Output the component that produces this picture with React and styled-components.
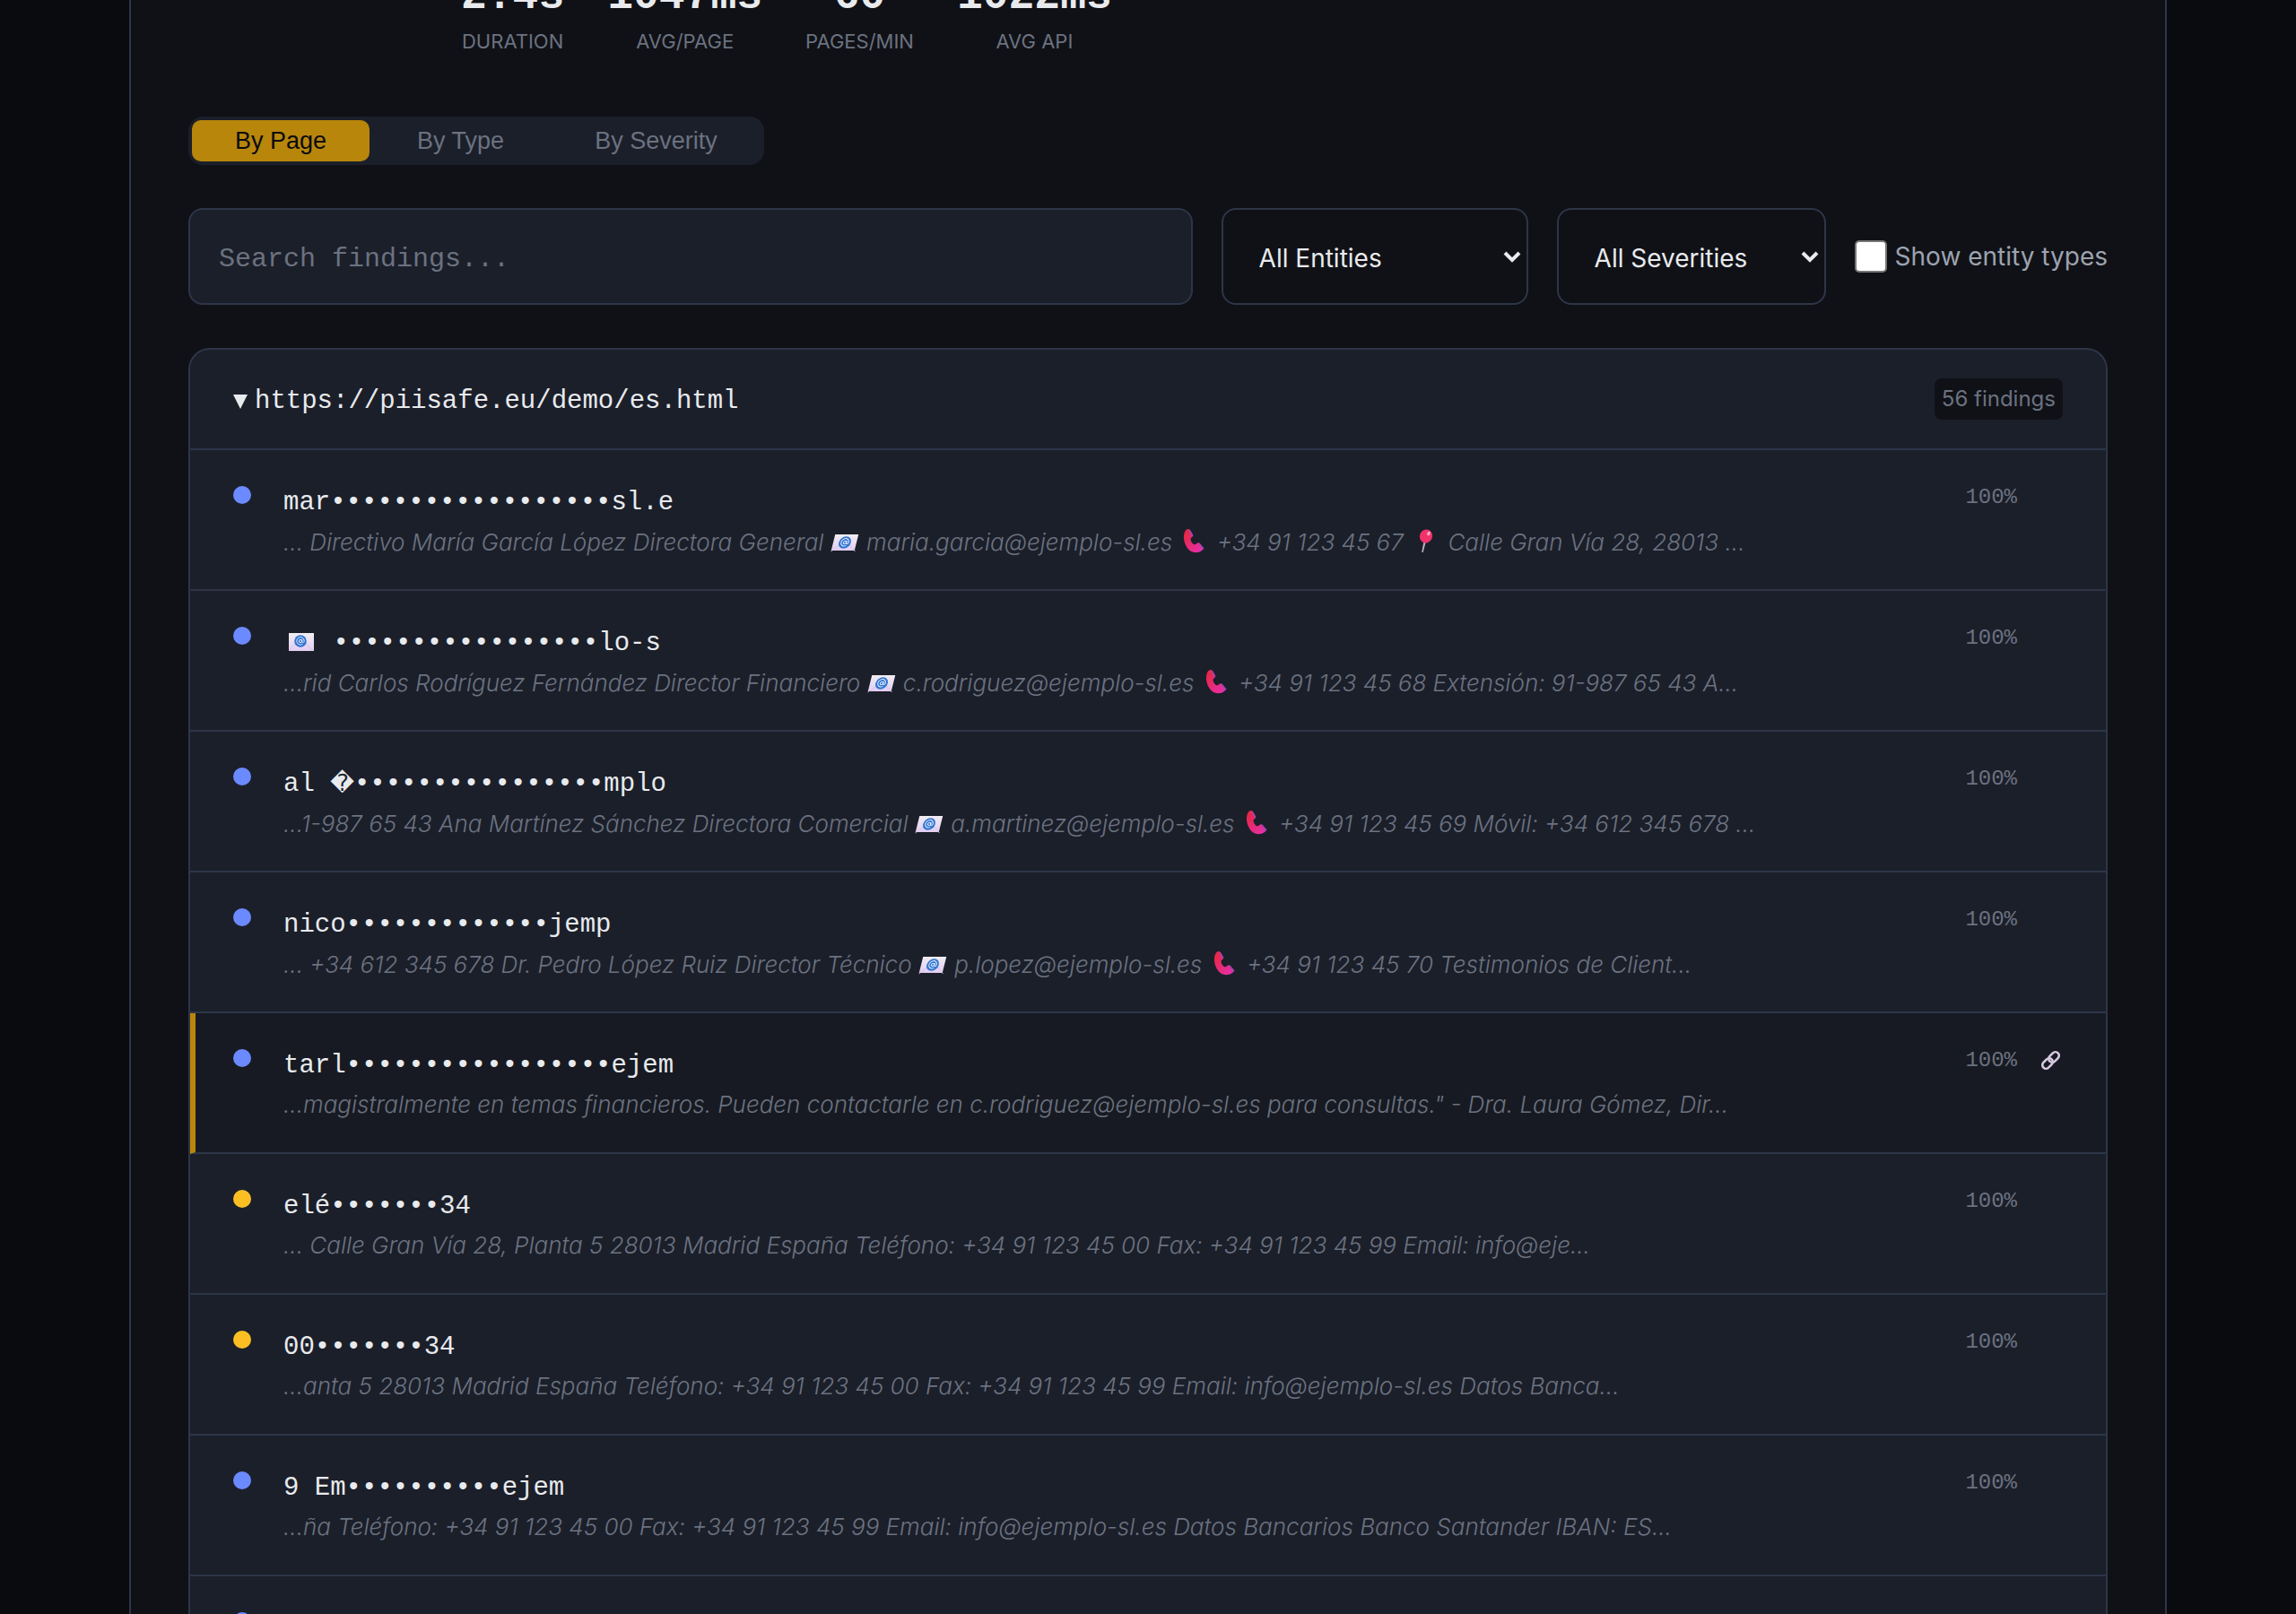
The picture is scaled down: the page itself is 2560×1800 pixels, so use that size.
import React, { useState } from "react";
import styled, { createGlobalStyle } from "styled-components";

const color = {
  page: "#0a0b0f",
  panel: "#101116",
  surface: "#1b1f2a",
  active: "#171a22",
  line: "#2d3548",
  text: "#e8eaed",
  soft: "#9ca3af",
  muted: "#6b7280",
  gold: "#b8860b",
  blue: "#6b8aff",
  amber: "#fbbf24",
};
const sans = `Inter, "Liberation Sans", sans-serif`;
const mono = `"Liberation Mono", monospace`;

const Global = createGlobalStyle`
  * { box-sizing: border-box; }
  body { margin: 0; background: ${color.page}; color: ${color.text}; font-family: ${sans}; }
`;

const Page = styled.div`
  height: 100vh;
  overflow: hidden;
  display: flex;
  justify-content: center;
`;
const Panel = styled.main`
  width: 100%;
  max-width: 2272px;
  margin: 0 144px;
  min-height: 100%;
  padding: 0 64px;
  background: ${color.panel};
  border: solid ${color.line};
  border-width: 0 2px;
`;
const Stats = styled.dl`
  display: flex;
  gap: 48px;
  margin: -34px 0 0;
  padding-left: 304px;
`;
const Stat = styled.div`
  display: flex;
  flex-direction: column;
  align-items: center;
`;
const StatValue = styled.dd`
  margin: 0;
  font: 700 48px/60px ${mono};
`;
const StatLabel = styled.dt`
  order: 1;
  font-size: 22px;
  line-height: 40px;
  color: ${color.muted};
  text-transform: uppercase;
`;
const Tabs = styled.div`
  display: inline-flex;
  gap: 5px;
  margin-top: 64px;
  padding: 4px;
  border-radius: 16px;
  background: ${color.surface};
`;
const Tab = styled.button`
  border: 0;
  border-radius: 10px;
  padding: 8px 48px;
  font: 27px/30px "Liberation Sans", sans-serif;
  color: ${(p) => (p.$active ? color.page : color.muted)};
  background: ${(p) => (p.$active ? color.gold : "transparent")};
  cursor: pointer;
`;
const Filters = styled.div`
  display: flex;
  align-items: center;
  gap: 32px;
  margin-top: 48px;
`;
const Search = styled.input`
  flex: 1;
  min-width: 0;
  height: 108px;
  padding: 6px 32px 0;
  border: 2px solid ${color.line};
  border-radius: 16px;
  background: ${color.surface};
  color: ${color.text};
  font: 30px ${mono};
  &::placeholder { color: ${color.muted}; opacity: 1; }
`;
const SelectBox = styled.div`
  position: relative;
  width: ${(p) => p.$width}px;
`;
const Select = styled.select`
  appearance: none;
  width: 100%;
  height: 108px;
  padding: 4px 40px 0;
  border: 2px solid ${color.line};
  border-radius: 16px;
  background: ${color.panel};
  color: ${color.text};
  font: 28px ${sans};
`;
const Chevron = styled.svg`
  position: absolute;
  right: 8px;
  top: 46px;
  width: 20px;
  height: 16px;
  pointer-events: none;
`;
const Toggle = styled.label`
  display: flex;
  align-items: center;
  gap: 9px;
  font-size: 28px;
  color: ${color.soft};
  white-space: nowrap;
`;
const Check = styled.input`
  appearance: none;
  width: 36px;
  height: 36px;
  margin: 0;
  border: 2px solid #767676;
  border-radius: 5px;
  background: #fff;
  &:checked { background: ${color.gold}; }
`;
const Group = styled.section`
  margin-top: 48px;
  border: 2px solid ${color.line};
  border-radius: 24px;
  overflow: hidden;
  background: ${color.surface};
`;
const GroupHeader = styled.header`
  display: flex;
  align-items: center;
  justify-content: space-between;
  height: 112px;
  padding: 0 48px;
  border-bottom: 2px solid ${color.line};
`;
const GroupTitle = styled.h2`
  display: flex;
  align-items: center;
  gap: 8px;
  margin: 0;
  padding-top: 6px;
  font: 400 29px/46px ${mono};
`;
const Caret = styled.svg`
  width: 16px;
  height: 16px;
`;
const Count = styled.span`
  padding: 0 8px;
  border-radius: 8px;
  background: ${color.panel};
  color: ${color.muted};
  font-size: 24px;
  line-height: 46px;
`;
const List = styled.ul`
  margin: 0;
  padding: 0;
  list-style: none;
`;
const Row = styled.li`
  display: grid;
  grid-template-columns: 20px 1fr auto 26px;
  height: 157px;
  padding: 32px 48px 0 ${(p) => (p.$linked ? 42 : 48)}px;
  border-bottom: 2px solid ${color.line};
  border-left: ${(p) => (p.$linked ? 6 : 0)}px solid ${color.gold};
  background: ${(p) => (p.$linked ? color.active : "transparent")};
`;
const Dot = styled.span`
  width: 20px;
  height: 20px;
  margin-top: 8px;
  border-radius: 50%;
  background: ${(p) => (p.$level === "medium" ? color.amber : color.blue)};
`;
const Body = styled.div`
  padding-left: 36px;
  min-width: 0;
`;
const Value = styled.div`
  height: 54px;
  font: 29px/54px ${mono};
  white-space: pre;
`;
const Unknown = styled.span`
  font: 26px "DejaVu Sans", sans-serif;
`;
const Context = styled.div`
  font-size: 26px;
  font-style: italic;
  font-weight: 300;
  line-height: 32px;
  color: ${color.muted};
  white-space: nowrap;
`;
const Score = styled.span`
  padding-right: 25px;
  font: 24px/42px ${mono};
  color: ${color.muted};
`;
const LinkMark = styled.svg`
  width: 26px;
  height: 40px;
`;
const Glyph = styled.svg`
  width: ${(p) => p.$size}px;
  height: 32px;
  vertical-align: -6px;
`;

function Mail({ upright }) {
  return (
    <Glyph $size={upright ? 38 : 33} viewBox={upright ? "-3 0 38 32" : "0 0 33 32"} role="img" aria-label="email">
      <defs>
        <linearGradient id="envelope" x1="0" y1="0" x2="0" y2="1">
          <stop offset="0" stopColor="#f1edf2" />
          <stop offset="1" stopColor="#e2cdf3" />
        </linearGradient>
      </defs>
      <g transform={upright ? undefined : "translate(4 1) skewX(-14)"}>
        <rect x="3" y="7" width={upright ? 28 : 26} height={upright ? 20 : 18} fill="url(#envelope)" />
        <path d="M3 26l9-8M30 26l-9-8" fill="none" stroke="#d3c4de" strokeWidth="0.8" />
        <circle cx="16" cy="16" r="6.8" fill="#3276d2" />
        <circle cx="16" cy="16" r="1.6" fill="none" stroke="#e6eefb" strokeWidth="1" />
        <path d="M17.800 14v2.600c0 1.600 2.400 1.200 2.400-.8a4.200 4.200 0 1 0-2 3.600" fill="none" stroke="#e6eefb" strokeWidth="1" />
      </g>
    </Glyph>
  );
}

function Phone() {
  return (
    <Glyph $size={35} viewBox="-2 0 35 32" role="img" aria-label="phone">
      <defs>
        <linearGradient id="handset" x1="0" y1="0" x2="0.8" y2="1">
          <stop offset="0.2" stopColor="#e8274b" />
          <stop offset="1" stopColor="#e52fa8" />
        </linearGradient>
      </defs>
      <path d="M6 3.500C2 9 4 20 10 25.500c4 3.500 10 3.500 14 .5 2-1.500 2-2.500.5-4l-3-4c-1-1-2-1-3 0l-2.500 1.500c-3-1-4.500-4-4.500-7L13 11c1-1 1-1.500.5-3L10.500 3c-1-1.500-3-1-4.500.5z" fill="url(#handset)" />
      <path d="M9 2.500l2 .5 3.500 6-1.500 2zM20 18l1.500-.5 5 6-2 2z" fill="#a844ad" />
    </Glyph>
  );
}

function Pin() {
  return (
    <Glyph $size={35} viewBox="-1 0 35 32" role="img" aria-label="location">
      <path d="M14.500 16l2.200.5-3 11.500-1.500-.3z" fill="#b9b2c6" />
      <ellipse cx="17" cy="10" rx="7" ry="7.600" transform="rotate(25 17 10)" fill="#f0336a" />
      <ellipse cx="20" cy="7" rx="1.700" ry="2.400" transform="rotate(25 20 7)" fill="#ffa9c4" />
    </Glyph>
  );
}

function Replacement() {
  return <Unknown>{"\uFFFD"}</Unknown>;
}

function Chain() {
  return (
    <LinkMark viewBox="0 0 26 40" role="img" aria-label="Linked finding">
      <g fill="none" stroke="#d9c9e2" strokeWidth="2.600">
        <rect x="-6.500" y="-4" width="13" height="8" rx="4" transform="translate(9 24) rotate(-45)" />
        <rect x="-6.500" y="-4" width="13" height="8" rx="4" transform="translate(16 17) rotate(-45)" />
      </g>
    </LinkMark>
  );
}

const dots = (n) => "•".repeat(n);

const stats = [
  ["2.4s", "Duration"],
  ["1047ms", "Avg/page"],
  ["60", "Pages/min"],
  ["1022ms", "Avg API"],
];

const findings = [
  { value: ["mar" + dots(18) + "sl.e"], context: ["... Directivo María García López Directora General ", Mail, " maria.garcia@ejemplo-sl.es ", Phone, " +34 91 123 45 67 ", Pin, " Calle Gran Vía 28, 28013 ..."] },
  { value: [Mail, " " + dots(17) + "lo-s"], context: ["...rid Carlos Rodríguez Fernández Director Financiero ", Mail, " c.rodriguez@ejemplo-sl.es ", Phone, " +34 91 123 45 68 Extensión: 91-987 65 43 A..."] },
  { value: ["al ", Replacement, dots(16) + "mplo"], context: ["...1-987 65 43 Ana Martínez Sánchez Directora Comercial ", Mail, " a.martinez@ejemplo-sl.es ", Phone, " +34 91 123 45 69 Móvil: +34 612 345 678 ..."] },
  { value: ["nico" + dots(13) + "jemp"], context: ["... +34 612 345 678 Dr. Pedro López Ruiz Director Técnico ", Mail, " p.lopez@ejemplo-sl.es ", Phone, " +34 91 123 45 70 Testimonios de Client..."] },
  { linked: true, value: ["tarl" + dots(17) + "ejem"], context: ['...magistralmente en temas financieros. Pueden contactarle en c.rodriguez@ejemplo-sl.es para consultas." - Dra. Laura Gómez, Dir...'] },
  { level: "medium", value: ["elé" + dots(7) + "34"], context: ["... Calle Gran Vía 28, Planta 5 28013 Madrid España Teléfono: +34 91 123 45 00 Fax: +34 91 123 45 99 Email: info@eje..."] },
  { level: "medium", value: ["00" + dots(7) + "34"], context: ["...anta 5 28013 Madrid España Teléfono: +34 91 123 45 00 Fax: +34 91 123 45 99 Email: info@ejemplo-sl.es Datos Banca..."] },
  { value: ["9 Em" + dots(10) + "ejem"], context: ["...ña Teléfono: +34 91 123 45 00 Fax: +34 91 123 45 99 Email: info@ejemplo-sl.es Datos Bancarios Banco Santander IBAN: ES..."] },
];

const render = (parts, upright) =>
  parts.map((Part, i) => (typeof Part === "string" ? Part : <Part key={i} upright={upright} />));

function Dropdown({ label, option, width }) {
  return (
    <SelectBox $width={width}>
      <Select aria-label={label}>
        <option>{option}</option>
      </Select>
      <Chevron viewBox="0 0 20 16" aria-hidden="true">
        <path d="M2 4l8 8 8-8" fill="none" stroke={color.text} strokeWidth="4" />
      </Chevron>
    </SelectBox>
  );
}

export default function App() {
  const [tab, setTab] = useState("By Page");
  return (
    <Page>
      <Global />
      <Panel>
        <Stats>
          {stats.map(([value, label]) => (
            <Stat key={label}>
              <StatLabel>{label}</StatLabel>
              <StatValue>{value}</StatValue>
            </Stat>
          ))}
        </Stats>
        <Tabs>
          {["By Page", "By Type", "By Severity"].map((name) => (
            <Tab key={name} type="button" aria-pressed={tab === name} $active={tab === name} onClick={() => setTab(name)}>
              {name}
            </Tab>
          ))}
        </Tabs>
        <Filters>
          <Search type="text" aria-label="Search findings" placeholder="Search findings..." />
          <Dropdown label="Entity" option="All Entities" width={342} />
          <Dropdown label="Severity" option="All Severities" width={300} />
          <Toggle>
            <Check type="checkbox" />
            Show entity types
          </Toggle>
        </Filters>
        <Group>
          <GroupHeader>
            <GroupTitle>
              <Caret viewBox="0 0 16 16" aria-hidden="true">
                <path d="M0 0h16L8 16z" fill={color.text} />
              </Caret>
              https://piisafe.eu/demo/es.html
            </GroupTitle>
            <Count>56 findings</Count>
          </GroupHeader>
          <List>
            {findings.map((f, i) => (
              <Row key={i} $linked={f.linked}>
                <Dot $level={f.level} />
                <Body>
                  <Value>{render(f.value, true)}</Value>
                  <Context>{render(f.context, false)}</Context>
                </Body>
                <Score>100%</Score>
                {f.linked && <Chain />}
              </Row>
            ))}
            <Row>
              <Dot />
            </Row>
          </List>
        </Group>
      </Panel>
    </Page>
  );
}
